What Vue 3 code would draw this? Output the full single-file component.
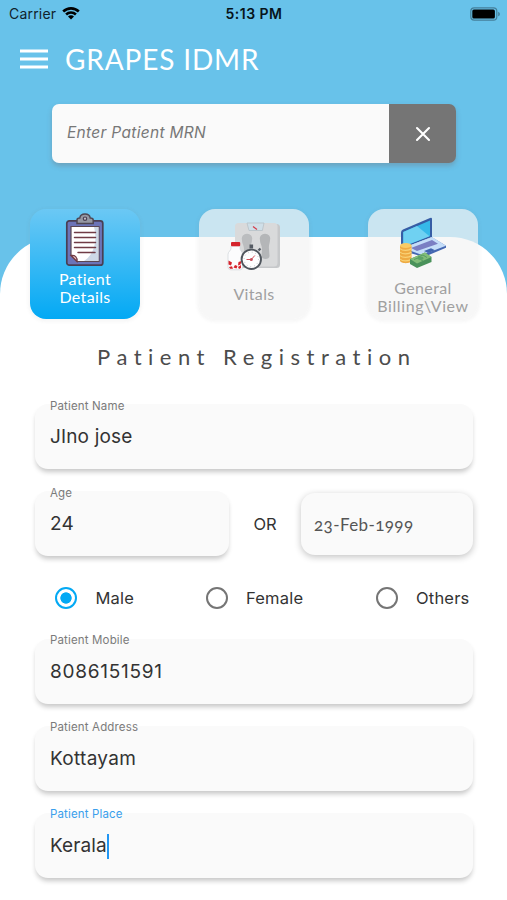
<script setup>
import { ref } from 'vue'

const mrn = ref('')
const gender = ref('Male')
const genders = ['Male', 'Female', 'Others']
const contact = [
  { label: 'Patient Mobile', value: '8086151591', cls: 'digits' },
  { label: 'Patient Address', value: 'Kottayam', cls: '' },
  { label: 'Patient Place', value: 'Kerala', cls: 'focused' },
]
</script>

<template>
  <div class="page">
    <div class="status">
      <div class="carrier">
        <span>Carrier</span>
        <svg width="18" height="14" viewBox="0 0 18 14">
          <path d="M0.3 4.6a12.5 12.5 0 0 1 17.4 0l-1.8 1.9a9.8 9.8 0 0 0-13.8 0z" />
          <path d="M3.2 7.6a8.3 8.3 0 0 1 11.6 0l-1.8 1.8a5.7 5.7 0 0 0-8 0z" />
          <path d="M6 10.5a4.2 4.2 0 0 1 6 0l-3 3z" />
        </svg>
      </div>
      <span class="clock">5:13 PM</span>
      <div class="power">
        <svg width="31" height="14" viewBox="0 0 31 14">
          <rect x="0.8" y="0.8" width="26" height="12.4" rx="3.4" fill="none" stroke="#447f9a" stroke-width="1.2" />
          <rect x="2.3" y="2.4" width="22.6" height="9.2" rx="1.6" fill="#000" />
          <path d="M28.2 4.7c2.2.8 2.2 3.8 0 4.6z" fill="#447f9a" />
        </svg>
      </div>
    </div>

    <header class="bar">
      <svg width="28" height="20" viewBox="0 0 28 20">
        <path d="M0 1.9h28M0 10h28M0 18.1h28" stroke="#fff" stroke-width="3" />
      </svg>
      <h1>GRAPES IDMR</h1>
    </header>

    <div class="search">
      <input v-model="mrn" placeholder="Enter Patient MRN" />
      <button>
        <svg width="16" height="16" viewBox="0 0 16 16">
          <path d="M2 2l12 12M14 2L2 14" stroke="#fff" stroke-width="2.1" stroke-linecap="round" />
        </svg>
      </button>
    </div>

    <main class="sheet">
      <nav class="tabs">
        <div class="tab active">
          <svg class="clip" width="40" height="54" viewBox="0 0 40 54">
            <rect x="1.8" y="7.8" width="36" height="44.4" rx="2.5" fill="#6c74b8" stroke="#493f54" stroke-width="1.7" />
            <path d="M6 13.5h28v35H12l-6-6z" fill="#fff" stroke="#5a4753" stroke-width="1.2" />
            <path d="M29 14h4.5v34H19c9-6 14-18 10-34z" fill="#cdd8e6" />
            <path d="M6 42.5c4-.5 6.500 1.500 6 6z" fill="#f0c9c4" stroke="#703b46" stroke-width="1.3" />
            <path d="M9.5 19.5h21M9.5 24.5h21M9.5 29.5h21M9.5 34.5h21M13 39.5h17" stroke="#713c46" stroke-width="1.5" stroke-linecap="round" />
            <path d="M12 10.5V7c0-1.600 1-2 2.800-2 .8-5.200 9.600-5.200 10.400 0 2 0 3 .5 3 2v3.500z" fill="#9698a3" stroke="#4e4653" stroke-width="1.5" />
            <circle cx="20" cy="5.7" r="1.7" fill="#c3bec6" stroke="#493f54" stroke-width="1.2" />
          </svg>
          <span>Patient<br />Details</span>
        </div>

        <div class="tab">
          <svg class="scale" width="54" height="52" viewBox="0 0 54 52">
            <rect x="9" y="3" width="44" height="44" rx="3.5" fill="#c6c8ca" />
            <rect x="8" y="2" width="42.5" height="43.5" rx="3.5" fill="#d9dadb" />
            <path d="M20 2h17l-1.6 7.5H22z" fill="#cfdfe8" stroke="#b6c0c7" stroke-width=".8" />
            <path d="M26 5.500l4 3" stroke="#d43d4a" stroke-width="1.3" />
            <path d="M15 19a5.200 5 0 1 1 10 0c0 3-2 5-1.500 10l1 8h-8l.5-9c0-4-2-5-2-9z" fill="#bbbdbf" />
            <path d="M33 19a5.200 5 0 1 1 10 0c0 3-1.500 5-1 9l.5 7c0 4-8 4-8 0l.5-7c0-4-2-5-2-9z" fill="#b4b6b8" />
            <path d="M4 25h9v2.500c0 2 2.500 3 2.500 6v12.500c0 2-1 2.800-3 2.800H4c-2 0-3-1-3-3V33.500c0-3 3-4 3-6z" fill="#fcfcfd" stroke="#cfd4d8" stroke-width=".7" />
            <rect x="4" y="21" width="9.2" height="4.2" rx="1" fill="#d5232c" />
            <path d="M1.5 39.500l3.500 2-1 3-2.500-1zM8 44l2.500 1-1 2.500-3-1zM11.500 41l3-1-1 3.500-2.500 1zM2 46l3-.8 1 2.500H3zM11 46l3-2v3l-2 1z" fill="#d5232c" />
            <path d="M24.3 27.5v-4" stroke="#555b63" stroke-width="3.6" />
            <path d="M31.5 29.500l2-2" stroke="#555b63" stroke-width="2.3" />
            <circle cx="24.3" cy="38.3" r="9.7" fill="#fff" stroke="#50565d" stroke-width="1.9" />
            <circle cx="24.3" cy="38.3" r="7.2" fill="none" stroke="#a4a9ad" stroke-width=".8" stroke-dasharray=".8 3" />
            <path d="M19.500 38.500h4.800l3.500-4" fill="none" stroke="#d3515b" stroke-width="1" />
            <circle cx="24.3" cy="38.5" r="1.5" fill="#c74e59" />
          </svg>
          <span>Vitals</span>
        </div>

        <div class="tab">
          <svg class="laptop" width="46" height="51" viewBox="0 0 46 51">
            <path d="M1 15.500q0-2 2-3L30 1q2-.7 2 1v18L3 31q-2 .5-2-1z" fill="#365da5" />
            <path d="M3.300 15L30 3.500V19L3.300 29.500z" fill="#36b9e9" />
            <path d="M3.300 15L17 9.100 29.500 19.200 3.300 29.500z" fill="#6fd1f2" />
            <path d="M3 31.500L32 20.300l14 8.400v2L24 40 3 34z" fill="#4567b1" />
            <path d="M3 31L32 20l14 8.700L22 38z" fill="#c4ddf9" />
            <path d="M11 31l21-8 6 3.800L17 34z" fill="#7a7ec3" />
            <path d="M24 34l7-2.700 4 2-7 2.700z" fill="#4164af" />
            <path d="M0 29h11.500v14.500c0 3.500-11.500 3.500-11.500 0z" fill="#eeab43" />
            <path d="M0 31.500c2 2.500 9 2.500 11.500 0M0 35c2 2.500 9 2.500 11.500 0M0 38.500c2 2.500 9 2.500 11.500 0M0 42c2 2.500 9 2.500 11.500 0" fill="none" stroke="#f9d276" stroke-width="1.2" />
            <ellipse cx="5.75" cy="28.5" rx="5.75" ry="2.5" fill="#f8cb64" />
            <path d="M10 42l15-6.500 6.500 4.500v5L17 51l-7-4z" fill="#4a925b" />
            <path d="M10 42l15-6.500 6.500 4.500L17 46.500z" fill="#82bd79" />
            <path d="M14 42.500L18 41l5 3M18 40l5-2 4 2.500" fill="none" stroke="#569d62" />
            <ellipse cx="20.5" cy="41.2" rx="3" ry="1.7" fill="#5ca267" />
          </svg>
          <span>General<br /><i>Billing\View</i></span>
        </div>
      </nav>

      <h2>Patient Registration</h2>

      <form class="form">
        <label class="field name">
          <small>Patient Name</small>
          <b>JIno jose</b>
        </label>

        <div class="age-row">
          <label class="field">
            <small>Age</small>
            <b>24</b>
          </label>
          <span class="or">OR</span>
          <div class="date">23-Feb-1999</div>
        </div>

        <div class="genders">
          <div v-for="g in genders" :key="g" class="choice" :class="{ on: g === gender }" @click="gender = g">
            <i class="radio"></i>
            <span>{{ g }}</span>
          </div>
        </div>

        <label v-for="f in contact" :key="f.label" class="field" :class="f.cls">
          <small>{{ f.label }}</small>
          <b>{{ f.value }}</b>
        </label>
      </form>
    </main>
  </div>
</template>

<style>
body {
  background: #fff;
  overflow: hidden;
}
</style>

<style scoped>
* {
  box-sizing: border-box;
}
.page {
  height: 900px;
  display: flex;
  flex-direction: column;
  background: #68c2ea;
  font-family: Inter, 'Liberation Sans', sans-serif;
  color: #333;
}
svg {
  display: block;
  flex: none;
}
.status {
  height: 27px;
  padding: 0 8px 0 9px;
  display: grid;
  grid-template-columns: 1fr auto 1fr;
  align-items: center;
  font-size: 14px;
  color: #10232d;
}
.carrier {
  display: flex;
  align-items: center;
  gap: 6px;
  letter-spacing: 0.2px;
}
.carrier svg {
  fill: #000;
  margin-top: -2px;
}
.clock {
  font-weight: 600;
  letter-spacing: 0.5px;
  color: #07141b;
}
.power {
  display: flex;
  justify-content: flex-end;
  margin-right: -2px;
}
.bar {
  height: 63px;
  padding: 0 20px;
  display: flex;
  align-items: center;
  gap: 17px;
}
h1 {
  margin: 0;
  font: 400 28px Lato, sans-serif;
  letter-spacing: 0.85px;
  color: #fff;
}
.search {
  margin: 14px 51px 0 52px;
  height: 59px;
  display: flex;
  border-radius: 7px;
  box-shadow: 0 3px 5px rgba(110, 125, 135, 0.45);
}
.search input {
  flex: 1;
  min-width: 0;
  padding: 0 15px 3px;
  border: 0;
  outline: 0;
  border-radius: 7px 0 0 7px;
  background: #fafafa;
  font: italic 400 15.5px Inter, sans-serif;
  letter-spacing: 0.3px;
}
.search input::placeholder {
  color: #777;
  opacity: 1;
}
.search button {
  width: 67px;
  border: 0;
  padding: 0;
  display: flex;
  align-items: center;
  justify-content: center;
  border-radius: 0 7px 7px 0;
  background: #757575;
}
.sheet {
  margin-top: 74px;
  flex: 1;
  background: #fff;
  border-radius: 57px 57px 0 0;
}
.tabs {
  margin-top: -28px;
  padding: 0 29px 0 30px;
  display: flex;
  justify-content: space-between;
}
.tab {
  width: 110px;
  height: 110px;
  display: flex;
  flex-direction: column;
  align-items: center;
  border-radius: 16px;
  background: rgba(243, 243, 243, 0.7);
  box-shadow: 0 1px 3px 2px rgba(120, 120, 120, 0.06);
  font: 400 16px/18px Lato, sans-serif;
  letter-spacing: 0.35px;
  text-align: center;
  color: #a0a0a0;
}
.tab i {
  font-style: normal;
  letter-spacing: 0.6px;
}
.tab.active {
  background: linear-gradient(#6bc8f4, #03a9f4);
  color: #fff;
}
.clip {
  margin: 4px 0 3px;
}
.scale {
  margin: 12px 0 12px;
}
.laptop {
  margin: 8px 0 11px;
}
h2 {
  margin: 24px 0 0;
  height: 28px;
  font: 400 22px/28px Lato, sans-serif;
  letter-spacing: 6.5px;
  text-align: center;
  text-indent: 6.5px;
  white-space: nowrap;
  color: #4c4c4c;
}
.form {
  padding: 33px 34px 0 35px;
  display: flex;
  flex-direction: column;
}
.field {
  height: 65px;
  margin-bottom: 22px;
  padding: 0 15px;
  display: flex;
  flex-direction: column;
  border-radius: 13px;
  background: #fafafa;
  box-shadow: 0 4px 5px -1px rgba(0, 0, 0, 0.22);
}
.field small {
  margin-top: -7px;
  font-size: 11.5px;
  line-height: 16px;
  letter-spacing: 0.15px;
  color: #7b7b7b;
}
.name small,
.age-row small {
  margin-top: -6px;
}
.field b {
  margin-top: 11px;
  display: flex;
  align-items: center;
  font-weight: 400;
  font-size: 19px;
  line-height: 26px;
  letter-spacing: 0.3px;
}
.name b,
.age-row b {
  margin-top: 10px;
  letter-spacing: 0.15px;
}
.digits b {
  letter-spacing: 0.75px;
}
.focused b {
  letter-spacing: 0.1px;
}
.focused small {
  color: #3aa0ec;
}
.focused b::after {
  content: '';
  width: 2px;
  height: 25px;
  background: #2196f3;
}
.age-row {
  display: flex;
}
.age-row .field {
  width: 194px;
}
.or {
  width: 72px;
  text-align: center;
  font-size: 16.5px;
  line-height: 66px;
}
.date {
  width: 172px;
  height: 62px;
  margin-top: 2px;
  padding-left: 13px;
  border-radius: 14px;
  background: #fafafa;
  box-shadow: 0 2px 7px rgba(0, 0, 0, 0.24);
  font: 400 17px/64px Lato, sans-serif;
  font-variant-numeric: oldstyle-nums;
  letter-spacing: 0.4px;
  color: #555;
}
.genders {
  height: 24px;
  margin: 8px 0 29px;
  padding-left: 20px;
  display: grid;
  grid-template-columns: 150.5px 170px auto;
}
.choice {
  display: flex;
  align-items: center;
  gap: 18.5px;
  font-size: 16.5px;
  letter-spacing: 0.2px;
}
.radio {
  width: 22px;
  height: 22px;
  flex: none;
  border: 2.5px solid #757575;
  border-radius: 50%;
}
.on .radio {
  border-color: #03a9f4;
  background: radial-gradient(circle, #03a9f4 5.3px, transparent 6px);
}
</style>
